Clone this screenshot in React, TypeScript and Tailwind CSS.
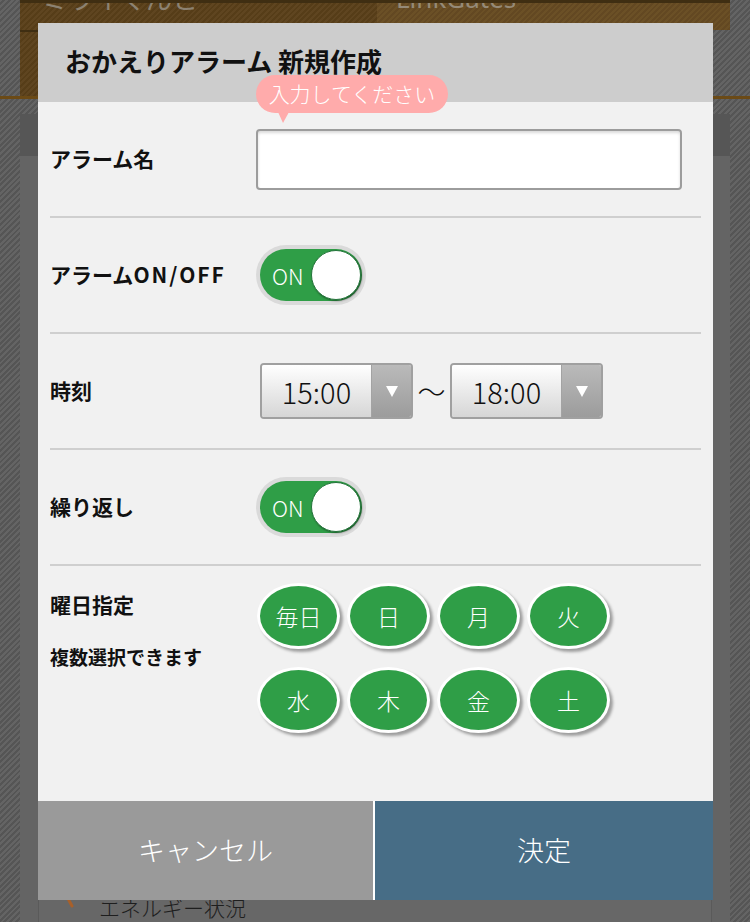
import React from "react";

const FONT = '"Noto Sans CJK JP", "Noto Sans", sans-serif';

function Toggle() {
  return (
    <div className="w-[110px] h-[60px] rounded-full bg-[#dadada] p-[4px]">
      <div className="relative w-[102px] h-[52px] rounded-full bg-[#2f9e47] flex items-center">
        <span className="pl-[12px] text-[22px] text-white leading-none font-light">ON</span>
        <div className="absolute right-[1px] top-[1px] w-[50px] h-[50px] rounded-full bg-white border border-[#23753a] shadow-[1px_1px_2px_rgba(0,0,0,0.45)]" />
      </div>
    </div>
  );
}

function TimeSelect({ value }: { value: string }) {
  return (
    <div className="w-[153px] h-[56px] border-2 border-[#a0a0a0] rounded-[4px] flex overflow-hidden">
      <div className="flex-1 bg-gradient-to-b from-white to-[#d6d6d6] flex items-center justify-center text-[29px] text-[#111] leading-none font-light">
        {value}
      </div>
      <div className="w-[40px] border-l border-[#a3a3a3] bg-gradient-to-b from-[#bababa] to-[#9c9c9c] flex items-center justify-center">
        <svg width="12" height="11" viewBox="0 0 12 11">
          <polygon points="0,0 12,0 6,11" fill="#ffffff" />
        </svg>
      </div>
    </div>
  );
}

function Day({ label }: { label: string }) {
  return (
    <div className="w-[83px] h-[66px] rounded-[50%] bg-[#2f9e47] border-[3px] border-white shadow-[3px_3px_3px_rgba(0,0,0,0.35)] flex items-center justify-center text-white text-[23px] leading-none font-light">
      {label}
    </div>
  );
}

export default function App() {
  const stripes =
    "bg-[repeating-linear-gradient(135deg,#646464_0px,#646464_2px,#555555_2px,#555555_4px)]";
  const brownDark =
    "bg-[repeating-linear-gradient(135deg,#5f4520_0px,#5f4520_2px,#563d18_2px,#563d18_4px)]";
  return (
    <div
      className={`relative w-[750px] h-[922px] overflow-hidden ${stripes}`}
      style={{ fontFamily: FONT }}
    >
      {/* background page */}
      <div className="flex flex-col h-full">
        <div className="h-[32px] mx-[20px] flex border-t-[3px] border-[#3f2e12]">
          <div className={`w-[357px] h-full overflow-hidden ${brownDark} pl-[22px]`}>
            <div className="mt-[-20px] text-[26px] leading-[30px] text-[#8c8272]">ミライくんと</div>
          </div>
          <div className="flex-1 h-full overflow-hidden bg-[repeating-linear-gradient(135deg,#6b5026_0px,#6b5026_2px,#634822_2px,#634822_4px)] pl-[19px]">
            <div className="mt-[-20px] text-[26px] leading-[30px] text-[#958a78]" style={{ fontFamily: '"Noto Sans", sans-serif' }}>LinkGates</div>
          </div>
        </div>
        <div className="h-[71px] mx-[20px] flex">
          <div className={`w-[357px] h-full border-t-2 border-[#3f2e12] ${brownDark}`} />
        </div>
        <div className="h-[4px] bg-[#6b4a16]" />
        <div className="h-[16px]" />
        <div className="mx-[20px] h-[45px] bg-[#565656]" />
        <div className="mx-[20px] flex-1 bg-[#646464] flex flex-col">
          <div className="h-[732px]" />
          <div className="mx-[18px] flex-1 border-x border-[#5a5a5a] bg-[#676767] flex items-start pl-[26px] pt-[4px]">
            <svg className="mt-[2px] mr-[25px]" width="9" height="20" viewBox="0 0 9 20">
              <polyline points="1,1 7,12" fill="none" stroke="#a8602a" strokeWidth="3" strokeLinecap="round" />
            </svg>
            <span className="text-[#1e1e1e] text-[21px] leading-[30px] font-light">エネルギー状況</span>
          </div>
        </div>
      </div>

      {/* modal */}
      <div className="absolute left-[38px] top-[23px] w-[675px] flex flex-col">
        <div className="h-[79px] bg-[#cdcdcd] flex items-center pl-[27px] pb-[3px]">
          <h1 className="text-[26px] font-bold text-[#111] leading-none">おかえりアラーム 新規作成</h1>
        </div>
        <div className="h-[699px] bg-[#f1f1f1] px-[12px]">
          {/* row 1 */}
          <div className="h-[116px] border-b-2 border-[#cfcfcf] flex items-center">
            <div className="w-[206px] shrink-0 text-[21px] font-bold text-[#111]">アラーム名</div>
            <div className="relative">
              <div className="absolute left-0 top-[-54px] h-[38px] w-[192px] rounded-full bg-[#ffabab] flex items-center justify-center text-white text-[21px] leading-none font-light">
                入力してください
                <svg className="absolute left-[22px] top-[37px]" width="11" height="11" viewBox="0 0 11 11">
                  <polygon points="0,0 11,0 5,11" fill="#ffabab" />
                </svg>
              </div>
              <div className="w-[426px] h-[61px] bg-white border-2 border-[#9c9c9c] rounded-[4px] shadow-[inset_0_2px_3px_rgba(0,0,0,0.15)]" />
            </div>
          </div>
          {/* row 2 */}
          <div className="h-[116px] border-b-2 border-[#cfcfcf] flex items-center">
            <div className="w-[206px] shrink-0 text-[21px] font-bold text-[#111]">
              アラーム<span className="tracking-[2px]">ON/OFF</span>
            </div>
            <Toggle />
          </div>
          {/* row 3 */}
          <div className="h-[116px] border-b-2 border-[#cfcfcf] flex items-center">
            <div className="w-[206px] shrink-0 text-[21px] font-bold text-[#111]">時刻</div>
            <div className="flex items-center ml-[4px]">
              <TimeSelect value="15:00" />
              <span className="w-[37px] text-center text-[28px] text-[#111] leading-none font-light">〜</span>
              <TimeSelect value="18:00" />
            </div>
          </div>
          {/* row 4 */}
          <div className="h-[116px] border-b-2 border-[#cfcfcf] flex items-center">
            <div className="w-[206px] shrink-0 text-[21px] font-bold text-[#111]">繰り返し</div>
            <Toggle />
          </div>
          {/* row 5 */}
          <div className="flex items-start">
            <div className="w-[206px] shrink-0 pt-[22px] flex flex-col text-[#111] font-bold">
              <span className="text-[21px] leading-[32px]">曜日指定</span>
              <span className="text-[19px] leading-[30px] mt-[22px]">複数選択できます</span>
            </div>
            <div className="pt-[17px] ml-[1px] grid grid-cols-4 gap-x-[7px] gap-y-[18px]">
              {["毎日", "日", "月", "火", "水", "木", "金", "土"].map((d) => (
                <Day key={d} label={d} />
              ))}
            </div>
          </div>
        </div>
        <div className="h-[99px] flex">
          <div className="w-[335px] bg-[#9a9a9a] flex items-center justify-center text-white text-[27px] font-light">キャンセル</div>
          <div className="w-[2px] bg-white" />
          <div className="flex-1 bg-[#476d86] flex items-center justify-center text-white text-[27px] font-light">決定</div>
        </div>
      </div>
    </div>
  );
}
